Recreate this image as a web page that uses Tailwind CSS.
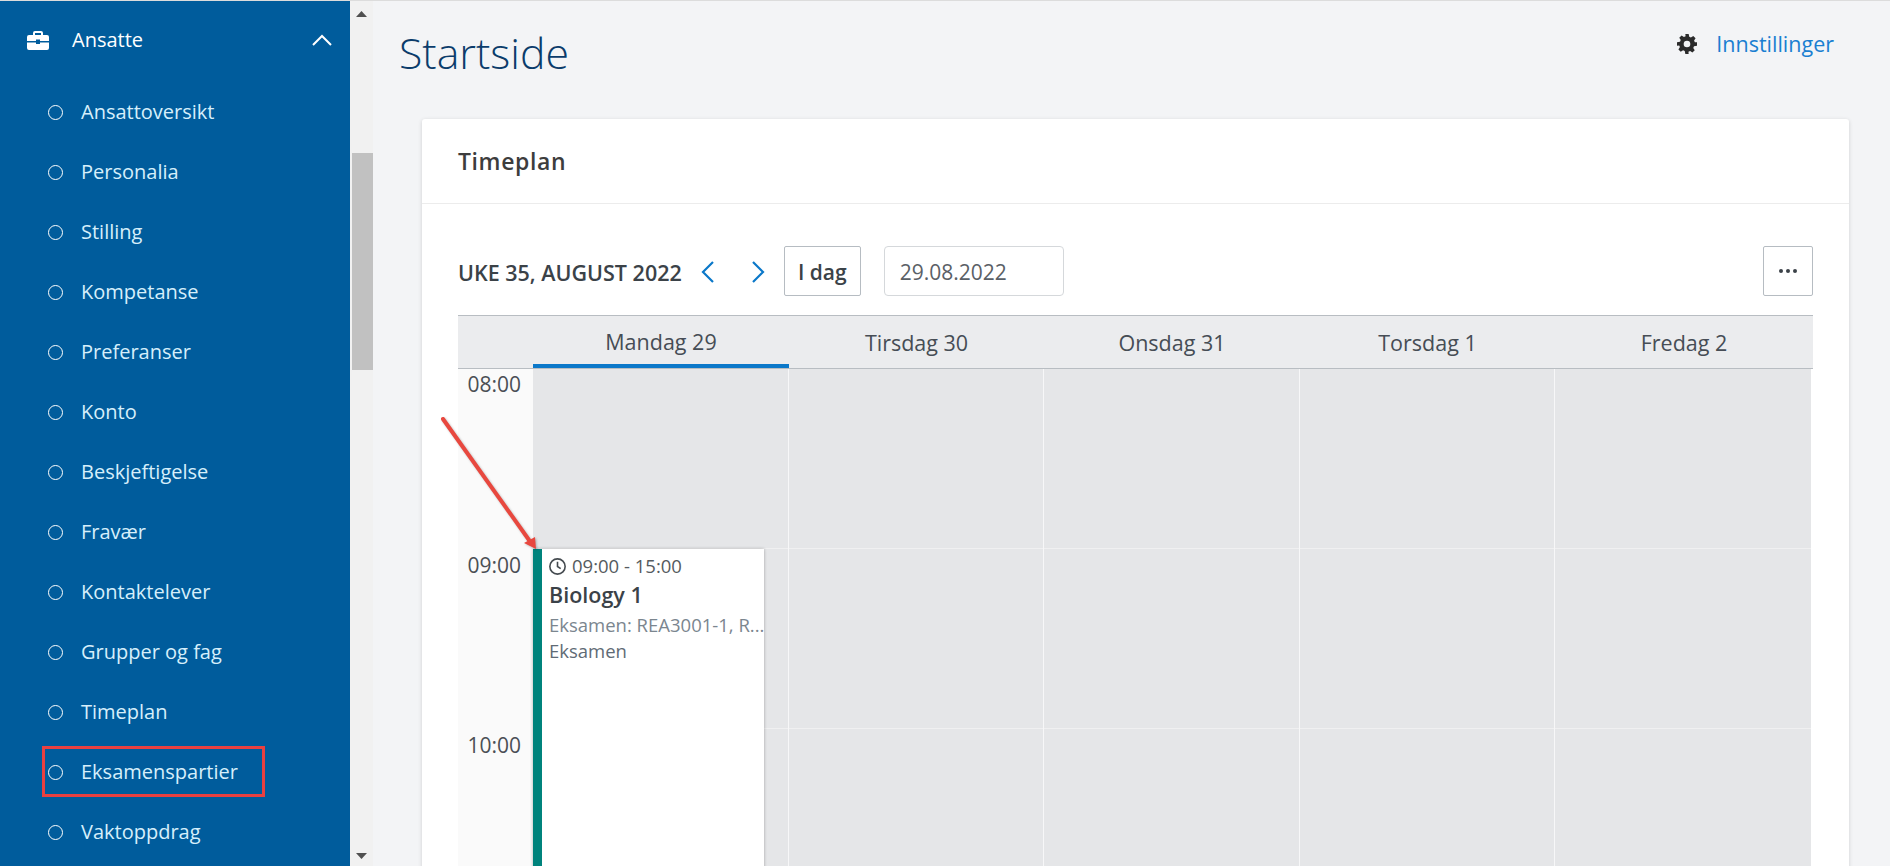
<!DOCTYPE html>
<html lang="nb"><head><meta charset="utf-8"><script src="https://cdn.jsdelivr.net/npm/@tailwindcss/browser@4"></script></head>
<body class="m-0 overflow-hidden font-['Open_Sans',sans-serif]">
<div class="relative flex h-[866px] w-[1890px] overflow-hidden border-t border-[#dcdcdc] bg-[#f3f4f6]">
  <aside class="w-[350px] shrink-0 bg-[#005c9c] text-white">
    <div class="flex h-[78px] items-center pl-[27px] pr-[18px]">
      <svg class="h-[19px] w-[22px]" viewBox="0 0 22 19" fill="#fff"><path d="M8 0h6a2 2 0 0 1 2 2v2h4a2 2 0 0 1 2 2v4H13V8.500H9V10H0V6a2 2 0 0 1 2-2h4V2a2 2 0 0 1 2-2zm0 2v2h6V2H8zM0 11.500h9V13h4v-1.500h9V17a2 2 0 0 1-2 2H2a2 2 0 0 1-2-2v-5.500z"/></svg>
      <span class="ml-[23px] flex-1 text-[20px]">Ansatte</span>
      <svg class="h-[12px] w-[20px]" viewBox="0 0 20 12" fill="none" stroke="#fff" stroke-width="2"><path d="M1 11l9-9 9 9"/></svg>
    </div>
    <ul class="mt-[3px] text-[20px] text-[#d6effb]">
      <li class="flex h-[60px] items-center pl-[48px]"><span class="h-[15px] w-[15px] rounded-full border border-white"></span><span class="ml-[18px]">Ansattoversikt</span></li>
      <li class="flex h-[60px] items-center pl-[48px]"><span class="h-[15px] w-[15px] rounded-full border border-white"></span><span class="ml-[18px]">Personalia</span></li>
      <li class="flex h-[60px] items-center pl-[48px]"><span class="h-[15px] w-[15px] rounded-full border border-white"></span><span class="ml-[18px]">Stilling</span></li>
      <li class="flex h-[60px] items-center pl-[48px]"><span class="h-[15px] w-[15px] rounded-full border border-white"></span><span class="ml-[18px]">Kompetanse</span></li>
      <li class="flex h-[60px] items-center pl-[48px]"><span class="h-[15px] w-[15px] rounded-full border border-white"></span><span class="ml-[18px]">Preferanser</span></li>
      <li class="flex h-[60px] items-center pl-[48px]"><span class="h-[15px] w-[15px] rounded-full border border-white"></span><span class="ml-[18px]">Konto</span></li>
      <li class="flex h-[60px] items-center pl-[48px]"><span class="h-[15px] w-[15px] rounded-full border border-white"></span><span class="ml-[18px]">Beskjeftigelse</span></li>
      <li class="flex h-[60px] items-center pl-[48px]"><span class="h-[15px] w-[15px] rounded-full border border-white"></span><span class="ml-[18px]">Fravær</span></li>
      <li class="flex h-[60px] items-center pl-[48px]"><span class="h-[15px] w-[15px] rounded-full border border-white"></span><span class="ml-[18px]">Kontaktelever</span></li>
      <li class="flex h-[60px] items-center pl-[48px]"><span class="h-[15px] w-[15px] rounded-full border border-white"></span><span class="ml-[18px]">Grupper og fag</span></li>
      <li class="flex h-[60px] items-center pl-[48px]"><span class="h-[15px] w-[15px] rounded-full border border-white"></span><span class="ml-[18px]">Timeplan</span></li>
      <li class="flex h-[60px] items-center pl-[48px]"><span class="h-[15px] w-[15px] rounded-full border border-white"></span><span class="ml-[18px]">Eksamenspartier</span></li>
      <li class="flex h-[60px] items-center pl-[48px]"><span class="h-[15px] w-[15px] rounded-full border border-white"></span><span class="ml-[18px]">Vaktoppdrag</span></li>
    </ul>
  </aside>
  <div class="flex w-[23px] shrink-0 flex-col items-center bg-[#f1f1f1]">
    <svg class="mt-[10px] h-[6px] w-[11px]" viewBox="0 0 11 6" fill="#505050"><path d="M5.500 0L11 6H0z"/></svg>
    <div class="ml-[2px] mt-[136px] h-[217px] w-[21px] bg-[#c1c1c1]"></div>
    <div class="flex-1"></div>
    <svg class="mb-[7px] h-[6px] w-[11px]" viewBox="0 0 11 6" fill="#505050"><path d="M0 0h11L5.500 6z"/></svg>
  </div>
  <main class="min-w-0 flex-1">
    <div class="flex h-[118px] items-start justify-between pl-[26px] pr-[56px]">
      <h1 class="mt-[23px] text-[42.800px] font-light leading-[58px] text-[#0b3c6b]">Startside</h1>
      <div class="mt-[27px] flex items-center">
        <svg class="h-[20px] w-[20px]" viewBox="0 0 24 24" fill="#2b2b2b"><path fill-rule="evenodd" d="M10 0h4l.7 3.200 2 .9 2.800-1.800 2.800 2.800-1.800 2.800.9 2L24 10v4l-3.600.7-.9 2 1.800 2.800-2.800 2.800-2.800-1.800-2 .9L14 24h-4l-.7-3.600-2-.9-2.800 1.800-2.800-2.800 1.800-2.800-.9-2L0 14v-4l3.600-.7.9-2-1.800-2.800 2.800-2.800 2.800 1.800 2-.9L10 0zm2 8a4 4 0 1 0 0 8 4 4 0 0 0 0-8z"/></svg>
        <a class="ml-[19px] text-[21.500px] text-[#1a7fd1]">Innstillinger</a>
      </div>
    </div>
    <section class="ml-[49px] mr-[41px] h-[760px] rounded-[3px] bg-white shadow-[0_1px_4px_rgba(0,0,0,0.15)]">
      <div class="flex h-[85px] items-center border-b border-[#ececec] px-[36px] text-[23px] font-semibold tracking-[0.6px] text-[#3d3d3d]">Timeplan</div>
      <div class="px-[36px] pt-[42px]">
        <div class="flex h-[50px] items-center">
          <span class="pt-[4px] text-[21.500px] font-semibold text-[#3b4248]">UKE 35, AUGUST 2022</span>
          <svg class="ml-[19px] mt-[2px] h-[22px] w-[14px]" viewBox="0 0 14 22" fill="none" stroke="#0b78c9" stroke-width="2.200"><path d="M12 1L2 11l10 10"/></svg>
          <svg class="ml-[36px] mt-[2px] h-[22px] w-[14px]" viewBox="0 0 14 22" fill="none" stroke="#0b78c9" stroke-width="2.200"><path d="M2 1l10 10L2 21"/></svg>
          <button class="ml-[19px] h-[50px] w-[77px] rounded-[2px] border border-[#b6bcc2] pt-[4px] text-[21px] font-semibold text-[#3b4248]">I dag</button>
          <div class="ml-[23px] flex h-[50px] w-[180px] items-center rounded-[4px] border border-[#d5d8db] pl-[15px] pt-[4px] text-[21px] text-[#5a6066]">29.08.2022</div>
          <button class="ml-auto flex h-[50px] w-[50px] items-center justify-center gap-[3px] rounded-[2px] border border-[#b6bcc2]">
            <span class="h-[4px] w-[4px] rounded-full bg-[#3b4248]"></span><span class="h-[4px] w-[4px] rounded-full bg-[#3b4248]"></span><span class="h-[4px] w-[4px] rounded-full bg-[#3b4248]"></span>
          </button>
        </div>
        <div class="mt-[19px] flex h-[54px] border-y border-[#b8bdc2] bg-[#ebecee] text-[21.500px] text-[#464d55]">
          <div class="w-[75px]"></div>
          <div class="flex w-[256px] items-center justify-center border-b-[4px] border-[#0b78c9] pt-[5px]">Mandag 29</div>
          <div class="flex w-[255px] items-center justify-center pt-[2px]">Tirsdag 30</div>
          <div class="flex w-[256px] items-center justify-center pt-[2px]">Onsdag 31</div>
          <div class="flex w-[255px] items-center justify-center pt-[2px]">Torsdag 1</div>
          <div class="flex flex-1 items-center justify-center pt-[2px]">Fredag 2</div>
        </div>
        <div class="flex h-[560px]">
          <div class="w-[75px] bg-[#fafafa] pr-[12px] text-right text-[21px] leading-[26px] text-[#4a4f55]">
            <div class="h-[180px] pt-[2px]">08:00</div>
            <div class="h-[180px] pt-[3px]">09:00</div>
            <div class="pt-[3px]">10:00</div>
          </div>
          <div class="mr-[2px] grid flex-1 grid-cols-5 bg-[#e5e6e8]">
            <div class="relative border-r border-[#f7f7f8]">
              <div class="h-[180px] border-b border-[#f0f0f1]"></div><div class="h-[180px] border-b border-[#f0f0f1]"></div>
              <div class="absolute left-0 top-[180px] h-[400px] w-[231px] border-l-[9px] border-[#00837c] bg-white pl-[7px] pr-0 pt-[4px] text-[18.500px] leading-[26px] text-[#5f6b75] shadow-[0_0_3px_rgba(0,0,0,0.3)]">
                <div class="flex items-center text-[#555b60]"><svg class="mr-[6px] h-[17px] w-[17px]" viewBox="0 0 16 16" fill="none" stroke="#454b50" stroke-width="1.500"><circle cx="8" cy="8" r="7.200"/><path d="M8 3.500V8l3 2"/></svg>09:00 - 15:00</div>
                <div class="mt-[1px] text-[21.500px] font-semibold leading-[30px] text-[#3b4248]">Biology 1</div>
                <div class="mt-[2px] whitespace-nowrap text-[#7b868f]">Eksamen: REA3001-1, R...</div>
                <div>Eksamen</div>
              </div>
            </div>
            <div class="border-r border-[#f7f7f8]"><div class="h-[180px] border-b border-[#f0f0f1]"></div><div class="h-[180px] border-b border-[#f0f0f1]"></div></div>
            <div class="border-r border-[#f7f7f8]"><div class="h-[180px] border-b border-[#f0f0f1]"></div><div class="h-[180px] border-b border-[#f0f0f1]"></div></div>
            <div class="border-r border-[#f7f7f8]"><div class="h-[180px] border-b border-[#f0f0f1]"></div><div class="h-[180px] border-b border-[#f0f0f1]"></div></div>
            <div><div class="h-[180px] border-b border-[#f0f0f1]"></div><div class="h-[180px] border-b border-[#f0f0f1]"></div></div>
          </div>
        </div>
      </div>
    </section>
  </main>
  <div class="absolute left-[42px] top-[745px] h-[51px] w-[223px] border-[3px] border-[#ea4040]"></div>
  <svg class="absolute left-[435px] top-[410px] h-[140px] w-[110px] drop-shadow-[1px_1px_1px_rgba(0,0,0,0.25)]" viewBox="0 0 110 140" fill="none">
    <path d="M8 8L94 129" stroke="#e8483f" stroke-width="4" stroke-linecap="round"/>
    <path d="M101 138L89 132L100 126z" fill="#e8483f"/>
  </svg>
</div>
</body></html>
